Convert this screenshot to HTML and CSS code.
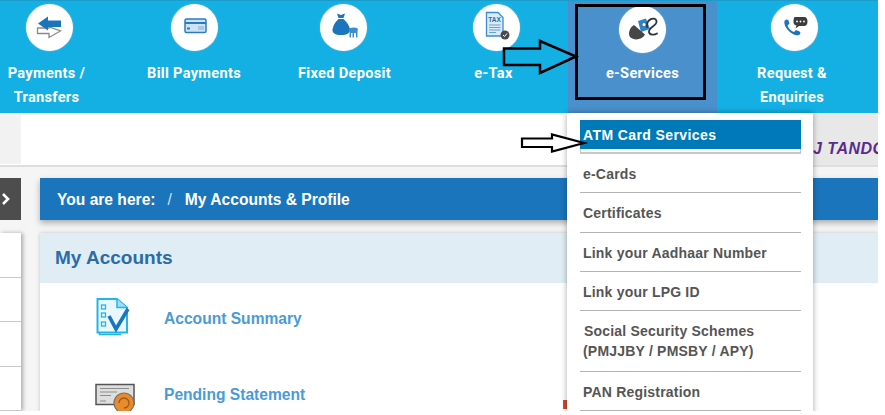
FILE: index.html
```html
<!DOCTYPE html>
<html lang="en">
<head>
<meta charset="utf-8">
<title>My Accounts &amp; Profile</title>
<link rel="stylesheet" href="styles.css">
</head>
<body>
<div class="page">
  <nav class="nav">
    <a class="nav-item nav-first">
      <span class="circle shift-first">
        <svg viewBox="0 0 47 47" width="47" height="47"><path d="M11.5 24H23V23L34.5 27L23 33.5V29.5H11.5Z" fill="#fff" stroke="#8a8a8a" stroke-width="1.3"/><path d="M12 19.5L22 12.5V16.5H35V23H22V26.5Z" fill="#1a75bc"/></svg>
      </span>
      <span class="nav-label">Payments /<br>Transfers</span>
    </a>
    <a class="nav-item nav-bill">
      <span class="circle">
        <svg viewBox="0 0 47 47" width="47" height="47"><rect x="14" y="15" width="21" height="13.5" rx="1.5" fill="#cfe2f2" stroke="#2a7cc0" stroke-width="1.5"/><rect x="14" y="18" width="21" height="2" fill="#2a7cc0"/><rect x="16" y="23.5" width="3" height="2" fill="#2a7cc0"/><rect x="27" y="22" width="6" height="4" fill="#a6c9e6"/></svg>
      </span>
      <span class="nav-label">Bill Payments</span>
    </a>
    <a class="nav-item">
      <span class="circle shift-deposit">
        <svg viewBox="0 0 47 47" width="47" height="47"><path d="M17 9.5L21 11L25 9.5L23.5 14H18.5Z" fill="#1a75bc"/><path d="M18.5 15H23.5C27 18 29.5 22 30 25.5C30.3 29 27 31 21 31C15 31 12 29 12.5 25.5C13 22 15 18 18.5 15Z" fill="#1a75bc"/><ellipse cx="33.5" cy="25.5" rx="4.5" ry="2" fill="#3d8ccb"/><path d="M29.5 27H37.5V33.5H36V29H34V33.5H32.5V29H31V33.5H29.5Z" fill="#3d8ccb"/></svg>
      </span>
      <span class="nav-label">Fixed Deposit</span>
    </a>
    <a class="nav-item">
      <span class="circle shift-tax">
        <svg viewBox="0 0 47 47" width="47" height="47"><path d="M13.5 8.5H25L30 13.5V32H13.5Z" fill="#dcebf7" stroke="#3d8ccb" stroke-width="1.3"/><text x="21.5" y="17.5" class="tax-text">TAX</text><path d="M16 21H27.5M16 23.5H27.5M16 26H27.5M16 28.5H23" stroke="#5fa3d8" stroke-width="1"/><circle cx="32" cy="31" r="4.5" fill="#4a4a4a"/><path d="M30 31L31.5 32.5L34 29.5" fill="none" stroke="#fff" stroke-width="1"/></svg>
      </span>
      <span class="nav-label">e-Tax</span>
    </a>
    <a class="nav-item nav-active">
      <span class="circle circle-low">
        <svg viewBox="0 0 47 47" width="47" height="47"><path d="M19 15L27 12.5L31 23L22 26Z" fill="#2d83c9"/><circle cx="25" cy="18.5" r="1.5" fill="#fff"/><path d="M15 19L26 28.5C23 34 15 35 11 31C8.5 27.5 11 21 15 19Z" fill="#464646"/><path d="M28 21C27 13 36 10 37.5 15C38.5 20 29.5 21 30 26C30.5 29 35 29.5 38 27.5" fill="none" stroke="#333" stroke-width="1.8" stroke-linecap="round"/></svg>
      </span>
      <span class="nav-label">e-Services</span>
    </a>
    <a class="nav-item nav-last">
      <span class="circle shift-last">
        <svg viewBox="0 0 47 47" width="47" height="47"><path d="M13.5 17C15 15 16.5 15 17.5 16.5L18.5 19.5L16.5 21.5C17.5 24.5 20 27 23 28L25 26L28.5 27.5C30 28.5 29.5 30 28 31C23 33 12 24 13.5 17Z" fill="#1a75bc"/><path d="M24 13H33C35.5 13 36.5 15 36.5 17.5C36.5 20.5 35 22 33 22H28L24.5 24.5L25.5 21.5C23 21 22.5 19.5 22.5 17.5C22.5 15 23 13 24 13Z" fill="#3c3c3c"/><circle cx="26" cy="17.5" r=".9" fill="#fff"/><circle cx="29.5" cy="17.5" r=".9" fill="#fff"/><circle cx="33" cy="17.5" r=".9" fill="#fff"/></svg>
      </span>
      <span class="nav-label">Request &amp;<br>Enquiries</span>
    </a>
  </nav>

  <header class="subheader">
    <div class="subheader-left"></div>
    <div class="subheader-main"></div>
    <div class="subheader-user">J TANDON</div>
  </header>

  <div class="body">
    <aside class="sidebar">
      <div class="toggle">
        <svg viewBox="0 0 10 14" width="10" height="14"><path d="M2 2L7 7L2 12" fill="none" stroke="#fff" stroke-width="2.6"/></svg>
      </div>
      <ul class="side-list">
        <li></li><li></li><li></li><li></li>
      </ul>
    </aside>
    <main class="content">
      <div class="crumb">
        <span>You are here:</span>
        <span class="crumb-sep">/</span>
        <span>My Accounts &amp; Profile</span>
      </div>
      <section class="card">
        <h2 class="card-title">My Accounts</h2>
        <div class="card-rows">
          <div class="row">
            <svg viewBox="0 0 40 40" width="40" height="40"><path d="M4.5 3V36.5H26" fill="none" stroke="#22b5ec" stroke-width="1.5"/><path d="M2.5 1H22L32 9.5V34.5H2.5Z" fill="#e9f8fe" stroke="#22b5ec" stroke-width="2"/><path d="M22 1V9.5H32" fill="#9be0fa" stroke="#22b5ec" stroke-width="1.5"/><rect x="6.5" y="7" width="4" height="4" fill="none" stroke="#22b5ec" stroke-width="1.3"/><rect x="6.5" y="15" width="4" height="4" fill="none" stroke="#22b5ec" stroke-width="1.3"/><rect x="6.5" y="24" width="4" height="4" fill="none" stroke="#22b5ec" stroke-width="1.3"/><path d="M14 18L21 31L33 11" fill="none" stroke="#1a75bc" stroke-width="3.6"/></svg>
            <a class="row-link">Account Summary</a>
          </div>
          <div class="row">
            <svg viewBox="0 0 40 40" width="40" height="40"><rect x="1" y="10.5" width="38" height="20" fill="#dedede" stroke="#555" stroke-width="1.5"/><path d="M5 14.5H34M5 18H22M5 21.5H16M5 27H11" stroke="#8d8d8d" stroke-width="1.2"/><circle cx="29" cy="29" r="10" fill="#e88b2c" stroke="#7a7065" stroke-width="1.2"/><path d="M24 29A5 5 0 1 1 29 34" fill="none" stroke="#9a5a18" stroke-width="1.3"/></svg>
            <a class="row-link">Pending Statement</a>
            <span class="row-mark"></span>
          </div>
        </div>
      </section>
    </main>
  </div>

  <ul class="menu">
    <li class="menu-item menu-active">ATM Card Services</li>
    <li class="menu-item">e-Cards</li>
    <li class="menu-item">Certificates</li>
    <li class="menu-item">Link your Aadhaar Number</li>
    <li class="menu-item">Link your LPG ID</li>
    <li class="menu-item menu-tall"><span class="menu-indent">Social Security Schemes</span><br>(PMJJBY / PMSBY / APY)</li>
    <li class="menu-item">PAN Registration</li>
  </ul>

  <svg class="marks" viewBox="0 0 878 411" width="878" height="411">
    <rect x="576.5" y="5.5" width="128" height="93" fill="none" stroke="#000" stroke-width="3"/>
    <path d="M504 48.5H540V41L576 56.5L540 73V65H504Z" fill="none" stroke="#000" stroke-width="2.5"/>
    <path d="M522 138.5H552V134.5L584 143L552 151.5V147H522Z" fill="#fff" stroke="#000" stroke-width="2.2"/>
  </svg>
</div>
</body>
</html>
```
FILE: styles.css
```css
* { box-sizing: border-box; }
html, body { margin: 0; padding: 0; background: #fff; }
.page {
  position: relative;
  width: 878px;
  height: 411px;
  overflow: hidden;
  background: #f5f5f5;
  font-family: "Liberation Sans", Arial, sans-serif;
}
.nav {
  display: flex;
  height: 113px;
  background: #14b0e3;
  border-top: 1px solid #1b9ccb;
  font-family: Roboto, "Liberation Sans", sans-serif;
}
.nav-item {
  width: 149px;
  display: flex;
  flex-direction: column;
  align-items: center;
  padding-top: 3px;
  color: #fff;
}
.nav-first { width: 121px; padding-right: 28px; }
.nav-bill { padding-right: 3px; }
.nav-last { width: 152px; padding-right: 2px; }
.nav-active { background: #4a90cc; }
.circle {
  width: 47px;
  height: 47px;
  flex: none;
  border-radius: 50%;
  background: #fff;
  box-shadow: 0 0 2px #7fb2dd;
}
.circle svg { display: block; }
.circle-low { margin-top: 2px; margin-bottom: -2px; }
.shift-first { margin-left: 6px; }
.shift-deposit { margin-right: 3px; }
.shift-tax { margin-left: 5px; }
.shift-last { margin-left: 4px; }
.nav-label {
  margin-top: 10px;
  font-size: 14.6px;
  font-weight: 700;
  letter-spacing: .3px;
  line-height: 24px;
  text-align: center;
  white-space: nowrap;
}
.tax-text {
  font-family: "Liberation Sans", sans-serif;
  font-size: 6.5px;
  font-weight: 700;
  fill: #2a6ca8;
  text-anchor: middle;
}
.subheader {
  display: flex;
  height: 54px;
  background: #fff;
  border-bottom: 2px solid #dedede;
}
.subheader-left { width: 21px; background: #f2f2f2; margin-bottom: 1px; }
.subheader-main { width: 792px; }
.subheader-user {
  flex: 1;
  overflow: hidden;
  white-space: nowrap;
  background: #e8e8e8;
  color: #5a2d8c;
  font-size: 16px;
  font-style: italic;
  font-weight: 700;
  padding-top: 27px;
  letter-spacing: .5px;
}
.body { display: flex; gap: 19px; padding-top: 11px; }
.sidebar { width: 21px; flex: none; }
.toggle {
  height: 42px;
  background: #4d4d4d;
  display: flex;
  align-items: center;
  padding-left: 1px;
}
.side-list {
  list-style: none;
  margin: 13px 0 0;
  padding: 0;
  background: #fff;
  box-shadow: 2px 0 4px rgba(0, 0, 0, .3);
}
.side-list li { height: 44.5px; border-bottom: 1px solid #c8c8c8; }
.content { flex: 1; min-width: 0; }
.crumb {
  display: flex;
  align-items: center;
  height: 42px;
  padding: 1px 0 0 17px;
  background: #1a75bc;
  box-shadow: 0 3px 6px rgba(0, 0, 0, .3);
  color: #fff;
  font-size: 15.6px;
  font-weight: 700;
}
.crumb-sep { margin: 0 13px 0 12px; font-weight: 400; color: #cfe0ef; }
.card {
  margin-top: 13px;
  background: #fff;
  box-shadow: 0 0 4px rgba(0, 0, 0, .2);
}
.card-title {
  margin: 0;
  height: 50px;
  padding: 14px 0 0 15px;
  background: #e0edf4;
  color: #2a6ca8;
  font-size: 19px;
  font-weight: 700;
  line-height: 22px;
}
.card-rows {
  display: flex;
  flex-direction: column;
  gap: 36px;
  padding: 15px 0 0 55px;
}
.row { display: flex; align-items: center; gap: 29px; height: 40px; }
.row svg { flex: none; }
.row-link { margin-top: 2px; color: #4a9bd6; font-size: 15.6px; font-weight: 700; }
.row-mark {
  width: 4px;
  height: 9px;
  margin-left: 229px;
  margin-top: 20px;
  background: #d9452f;
}
.menu {
  position: absolute;
  left: 567px;
  top: 113px;
  width: 246px;
  height: 310px;
  margin: 0;
  padding: 7px 12px 0 13px;
  list-style: none;
  background: #fff;
  box-shadow: 0 0 6px rgba(0, 0, 0, .35);
  color: #555;
  font-size: 14px;
  font-weight: 700;
}
.menu-item {
  display: flex;
  flex-direction: column;
  justify-content: center;
  height: 39.3px;
  padding-top: 2px;
  padding-left: 3px;
  border-bottom: 1px solid #b4b4b4;
  letter-spacing: .2px;
  line-height: 20px;
}
.menu-active {
  display: block;
  height: 29px;
  margin-bottom: 5px;
  padding-top: 5px;
  background: #0079b8;
  color: #fff;
  border-bottom: 0;
  letter-spacing: .4px;
  box-shadow: 0 4px 0 -1px #fff, 0 5px 0 0 #c8c8c8;
}
.menu-tall { height: 61px; display: block; padding-top: 10px; }
.menu-indent { margin-left: 1px; }
.marks { position: absolute; left: 0; top: 0; pointer-events: none; }
```
